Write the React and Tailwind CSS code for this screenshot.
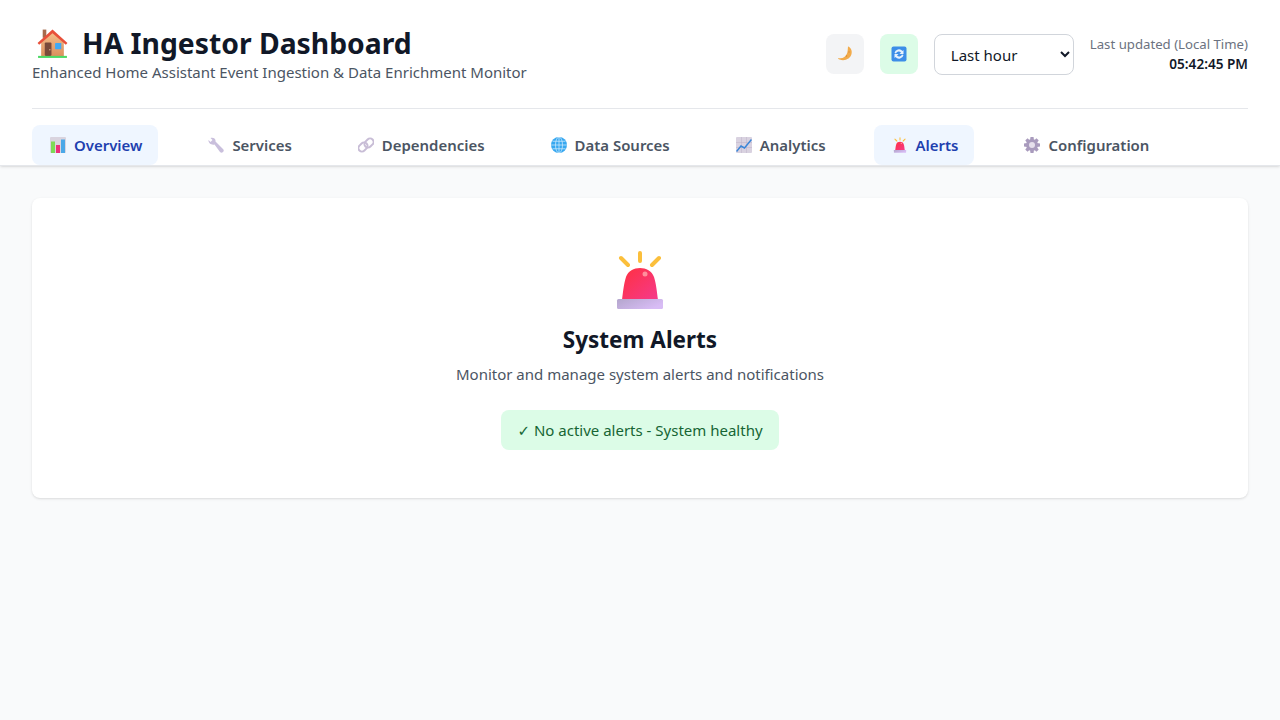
import React from "react";

const font = { fontFamily: '"Noto Sans", "Open Sans", sans-serif' };

function House({ className }) {
  return (
    <svg viewBox="0 0 32 32" className={className}>
      <defs>
        <linearGradient id="wall" x1="0" y1="0" x2="0" y2="1">
          <stop offset="0" stopColor="#f6c08c" />
          <stop offset="1" stopColor="#d98f5c" />
        </linearGradient>
      </defs>
      <rect x="6.5" y="2.5" width="3.5" height="8" fill="#a66a4c" />
      <path d="M5 14 16 4l11 10v15H5z" fill="url(#wall)" />
      <path d="M1.5 15.5 16 2.5l14.5 13-1.6 1.6L16 6 3.1 17.1z" fill="#e8503a" />
      <rect x="8.5" y="15" width="6.5" height="13" rx="1" fill="#7a4a3a" />
      <circle cx="13.4" cy="22" r=".7" fill="#d9b08c" />
      <rect x="18.5" y="15.5" width="6" height="6" rx=".6" fill="#3fa9f5" />
      <rect x="2" y="28" width="28" height="2" fill="#4cd964" />
    </svg>
  );
}

function Moon({ className }) {
  return (
    <svg viewBox="0 0 32 32" className={className}>
      <path d="M22 1c5 1 9 8 7 15-2 9-13 15-24 11-2-.8-3-2-3-3 9 2 15-2 18-9 1.500-4 1.500-9 2-14z" fill="#f2ab4b" />
      <circle cx="19" cy="20" r="1.500" fill="#d98b34" />
      <circle cx="24" cy="12" r="1.300" fill="#d98b34" />
    </svg>
  );
}

function Refresh({ className }) {
  return (
    <svg viewBox="0 0 32 32" className={className}>
      <rect x="1" y="1" width="30" height="30" rx="4" fill="#3d8ee8" />
      <path d="M7 14a9 9 0 0 1 16-4l2-2v8h-8l3-3a6 6 0 0 0-10 2z" fill="#e6f1fd" />
      <path d="M25 18a9 9 0 0 1-16 4l-2 2v-8h8l-3 3a6 6 0 0 0 10-2z" fill="#e6f1fd" />
    </svg>
  );
}

function BarChart({ className }) {
  return (
    <svg viewBox="0 0 32 32" className={className}>
      <rect x="0" y="0" width="32" height="32" rx="2" fill="#d9d4df" />
      <rect x="2" y="9" width="8" height="23" fill="#7ed957" />
      <rect x="12" y="16" width="8" height="16" fill="#ec2f7b" />
      <rect x="22" y="5" width="8" height="27" fill="#4aa8e8" />
    </svg>
  );
}

function Wrench({ className }) {
  return (
    <svg viewBox="0 0 32 32" className={className}>
      <path d="M1 6l4 4 4-4-4-4c5-2 11 1 10 7l15 15a4 4 0 0 1-6 6L13 15C7 17 0 12 1 6z" fill="#c9bfdc" />
    </svg>
  );
}

function LinkIcon({ className }) {
  return (
    <svg viewBox="0 0 32 32" className={className} fill="none" stroke="#c8bdd6" strokeWidth="4">
      <rect x="15" y="2" width="14" height="20" rx="7" transform="rotate(45 22 12)" />
      <rect x="3" y="10" width="14" height="20" rx="7" transform="rotate(45 10 20)" />
    </svg>
  );
}

function Globe({ className }) {
  return (
    <svg viewBox="0 0 32 32" className={className}>
      <circle cx="16" cy="16" r="16" fill="#38a8f0" />
      <g fill="none" stroke="#cdeafc" strokeWidth="1.500">
        <ellipse cx="16" cy="16" rx="7" ry="16" />
        <path d="M16 0v32M0 16h32M3 8.500h26M3 23.500h26" />
      </g>
    </svg>
  );
}

function LineChart({ className }) {
  return (
    <svg viewBox="0 0 32 32" className={className}>
      <rect x="0" y="0" width="32" height="32" rx="2" fill="#d9d2e0" />
      <path d="M0 11h32M0 21h32M11 0v32M21 0v32" stroke="#bdb3c9" strokeWidth="1" />
      <path d="M1 29l9-11 7 4L31 5" fill="none" stroke="#3a86d8" strokeWidth="3" />
    </svg>
  );
}

function Gear({ className }) {
  return (
    <svg viewBox="0 0 32 32" className={className}>
      <g fill="#a99bbd">
        <circle cx="16" cy="16" r="12" />
        {[0, 45, 90, 135, 180, 225, 270, 315].map((a) => (
          <rect key={a} x="12.500" y="0" width="7" height="8" rx="1.500" transform={`rotate(${a} 16 16)`} />
        ))}
      </g>
      <circle cx="16" cy="16" r="6" fill="#e6e0ec" />
    </svg>
  );
}

// dome, base and rays are shared by the tab icon and the big one
function Siren({ className, id }) {
  return (
    <svg viewBox="0 0 48 60" className={className}>
      <defs>
        <linearGradient id={`${id}-dome`} x1="0" y1="0" x2="1" y2="1">
          <stop offset="0" stopColor="#ff3040" />
          <stop offset="1" stopColor="#f53a8c" />
        </linearGradient>
        <linearGradient id={`${id}-base`} x1="0" y1="0" x2="1" y2="0.500">
          <stop offset="0" stopColor="#b3a6cc" />
          <stop offset="1" stopColor="#d8bcf5" />
        </linearGradient>
      </defs>
      <path d="M6 50C7 42 8 33 10 27 12 21 18 18 24 18S36 21 38 27C40 33 41 42 42 50z" fill={`url(#${id}-dome)`} />
      <circle cx="29" cy="24" r="2.500" fill="#ff8f9c" />
      <rect x="1" y="49" width="46" height="10" rx="1.500" fill={`url(#${id}-base)`} />
      <g stroke="#fbbf3c" strokeWidth="4" strokeLinecap="round">
        <path d="M24 3v8M5 8l7 7M43 8l-7 7" />
      </g>
    </svg>
  );
}

const tabs = [
  { label: "Overview", icon: BarChart, active: true },
  { label: "Services", icon: Wrench },
  { label: "Dependencies", icon: LinkIcon },
  { label: "Data Sources", icon: Globe },
  { label: "Analytics", icon: LineChart },
  { label: "Alerts", icon: Siren, active: true },
  { label: "Configuration", icon: Gear },
];

export default function App() {
  return (
    <div className="min-h-screen bg-[#f9fafb]" style={font}>
      <header className="bg-white border-b border-[#e5e7eb] shadow-sm px-8">
        <div className="flex items-center justify-between border-b border-[#e5e7eb] py-6">
          <div>
            <h1 className="flex h-9 items-center gap-[13px] pl-1 pt-0.5 text-[28.3px] font-bold text-[#111827]">
              <House className="h-[33px] w-[33px]" />
              HA Ingestor Dashboard
            </h1>
            <p className="text-[15px] leading-6 text-[#4b5563]">Enhanced Home Assistant Event Ingestion &amp; Data Enrichment Monitor</p>
          </div>
          <div className="flex items-center gap-4">
            <button className="flex h-10 w-[38px] items-center justify-center rounded-lg bg-[#f3f4f6]">
              <Moon className="w-4 h-4" />
            </button>
            <button className="flex h-10 w-[38px] items-center justify-center rounded-lg bg-[#dcfce7]">
              <Refresh className="w-4 h-4" />
            </button>
            <select className="h-[41px] w-[140px] rounded-lg border border-[#d1d5db] bg-white px-3 pt-0.5 text-[15px] text-[#111827]">
              <option>Last hour</option>
            </select>
            <div className="text-right">
              <p className="text-[13.2px] leading-5 text-[#6b7280]">Last updated (Local Time)</p>
              <p className="text-[13.6px] leading-5 font-semibold text-[#111827]">05:42:45 PM</p>
            </div>
          </div>
        </div>
        <nav className="flex gap-8 pt-4">
          {tabs.map((tab) => (
            <div
              key={tab.label}
              className={`flex h-10 items-center gap-2 rounded-lg pl-[18px] pr-4 text-[14.95px] font-semibold ${
                tab.active ? "bg-[#eff6ff] text-[#1e40af]" : "text-[#4b5563]"
              }`}
            >
              <tab.icon className="h-4 w-4" id="tab-siren" />
              {tab.label}
            </div>
          ))}
        </nav>
      </header>
      <main className="p-8">
        <div className="flex flex-col items-center rounded-lg bg-white p-12 shadow-sm">
          <Siren className="mb-3 mt-1 h-[60px] w-12" id="big-siren" />
          <h2 className="mb-1.5 mt-0.5 text-[22.5px] leading-8 font-bold text-[#111827]">System Alerts</h2>
          <p className="mb-6 text-[15px] leading-6 text-[#4b5563]">Monitor and manage system alerts and notifications</p>
          <div className="h-10 rounded-lg bg-[#dcfce7] px-4 py-2 text-[15px] leading-6 text-[#166534]">
            <span className="leading-none" style={{ fontFamily: '"DejaVu Sans", sans-serif' }}>✓</span> No active alerts - System healthy
          </div>
        </div>
      </main>
    </div>
  );
}
